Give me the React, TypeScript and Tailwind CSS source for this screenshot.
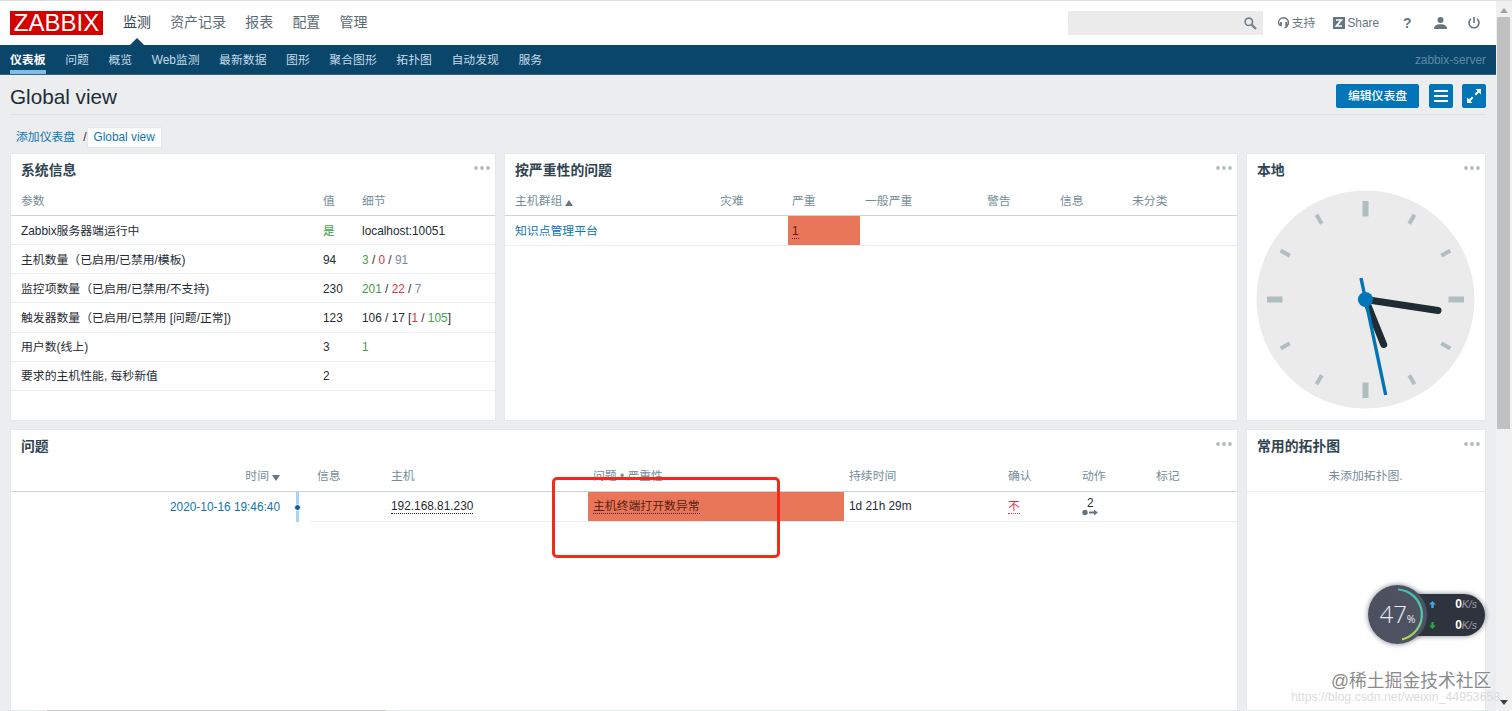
import type { ReactNode } from 'react';

const mainMenu = ['监测', '资产记录', '报表', '配置', '管理'];
const subMenu = ['仪表板', '问题', '概览', 'Web监测', '最新数据', '图形', '聚合图形', '拓扑图', '自动发现', '服务'];

const green = 'text-[#429e47]';
const red = 'text-[#dc3545]';
const grey = 'text-[#768d99]';

const systemInfo: { name: string; value: ReactNode; details?: ReactNode }[] = [
  { name: 'Zabbix服务器端运行中', value: <span className={green}>是</span>, details: 'localhost:10051' },
  {
    name: '主机数量（已启用/已禁用/模板)',
    value: '94',
    details: (
      <>
        <span className={green}>3</span> / <span className={red}>0</span> / <span className={grey}>91</span>
      </>
    ),
  },
  {
    name: '监控项数量（已启用/已禁用/不支持)',
    value: '230',
    details: (
      <>
        <span className={green}>201</span> / <span className={red}>22</span> / <span className={grey}>7</span>
      </>
    ),
  },
  {
    name: '触发器数量（已启用/已禁用 [问题/正常])',
    value: '123',
    details: (
      <>
        106 / 17 [<span className={red}>1</span> / <span className={green}>105</span>]
      </>
    ),
  },
  { name: '用户数(线上)', value: '3', details: <span className={green}>1</span> },
  { name: '要求的主机性能, 每秒新值', value: '2' },
];

function Widget({ title, className, children }: { title: string; className: string; children: ReactNode }) {
  return (
    <section className={`flex flex-col bg-white shadow-[0_0_0_1px_#e6e8ea] ${className}`}>
      <header className="flex h-8 shrink-0 items-center justify-between pr-[5px] pl-[10px]">
        <h4 className="text-[13.85px] font-bold text-[#2f4450]">{title}</h4>
        <svg className="-mt-1 h-1 w-4" viewBox="0 0 16 4" fill="#b4bbbe">
          <circle cx="2" cy="2" r="1.9" />
          <circle cx="8" cy="2" r="1.9" />
          <circle cx="14" cy="2" r="1.9" />
        </svg>
      </header>
      {children}
    </section>
  );
}

function Clock() {
  return (
    <svg className="mt-[4px] ml-[9px] h-[219px] w-[219px]" viewBox="-109.5 -109.5 219 219">
      <circle r="109" fill="#ebebeb" />
      {Array.from({ length: 12 }, (_, i) =>
        i % 3 === 0 ? (
          <rect key={i} x="-3" y="-98.5" width="6" height="15.5" fill="#b0bebf" transform={`rotate(${i * 30})`} />
        ) : (
          <rect key={i} x="-2" y="-98" width="4" height="10.5" fill="#b0bebf" transform={`rotate(${i * 30})`} />
        )
      )}
      <g strokeLinecap="round" stroke="#1f2c33" strokeWidth="7">
        <line x1="0" y1="0" x2="18.2" y2="45" />
        <line x1="0" y1="0" x2="72.5" y2="11" />
      </g>
      <line x1="-4.5" y1="-21.5" x2="20.2" y2="95.5" stroke="#0275b8" strokeWidth="3.4" />
      <circle r="7.6" fill="#0275b8" />
    </svg>
  );
}

function SpeedMonitor() {
  return (
    <div className="absolute top-[585px] left-[1368px] flex items-center">
      <div className="z-10 flex h-[59px] w-[59px] items-center justify-center rounded-full bg-gradient-to-br from-[#4b4f5e] to-[#4f5462] shadow-[0_0_4px_1px_rgba(60,65,85,0.45)]">
        <svg className="absolute top-0 left-0 h-[59px] w-[59px]" viewBox="0 0 59 59" fill="none">
          <defs>
            <linearGradient id="load" x1="0" y1="0" x2="0" y2="1">
              <stop offset="0" stopColor="#3fc4b4" />
              <stop offset="0.6" stopColor="#58c8a8" />
              <stop offset="1" stopColor="#c4cf50" />
            </linearGradient>
          </defs>
          <path d="M30 4.500 A25.200 25.200 0 0 1 34 54.300" stroke="url(#load)" strokeWidth="2.2" />
        </svg>
        <div className="flex items-baseline font-['Open_Sans'] text-[#e9ebf0]">
          <span className="text-[24px] leading-none font-light">47</span>
          <span className="text-[10.5px]">%</span>
        </div>
      </div>
      <div className="-ml-7 flex h-[42px] w-[86px] flex-col justify-center rounded-r-full bg-[#2e333d] pr-2 pl-[30px] shadow-[0_0_4px_1px_rgba(60,65,85,0.45)]">
        <div className="flex h-[21px] items-center justify-between">
          <svg className="h-[7px] w-[7px]" viewBox="0 0 7 7" fill="#42a5e8">
            <path d="M3.5 0 7 3.6H4.7V7H2.300V3.6H0z" />
          </svg>
          <span className="text-[12px] font-bold text-white">
            0<i className="text-[10.5px] font-normal text-[#9ba0aa]">K/s</i>
          </span>
        </div>
        <div className="flex h-[21px] items-center justify-between">
          <svg className="h-[7px] w-[7px]" viewBox="0 0 7 7" fill="#28a745">
            <path d="M3.5 7 0 3.4h2.3V0h2.400v3.4H7z" />
          </svg>
          <span className="text-[12px] font-bold text-white">
            0<i className="text-[10.5px] font-normal text-[#9ba0aa]">K/s</i>
          </span>
        </div>
      </div>
    </div>
  );
}

function Header() {
  return (
    <header className="flex h-[45px] shrink-0 items-center border-t border-[#dedede] bg-white pr-[16px] pl-[10px]">
      <div className="flex h-6 w-[93px] items-center justify-center bg-[#d40000] text-[24px] leading-6 text-white">ZABBIX</div>
      <nav className="ml-5 flex gap-[19.3px] text-[13.95px] text-[#5b6a73]">
        {mainMenu.map((item, i) => (
          <a key={item} className={i === 0 ? 'relative -top-px text-[#2f4450]' : 'relative -top-px'}>
            {item}
            {i === 0 && (
              <svg className="absolute top-[25px] left-[6px] h-2 w-4" viewBox="0 0 16 8" fill="#0a466a">
                <path d="M8 0 16 8H0z" />
              </svg>
            )}
          </a>
        ))}
      </nav>
      <div className="ml-auto flex items-center text-[11.85px] text-[#66757e]">
        <div className="flex h-6 w-[195px] items-center justify-end bg-[#ebebec] pr-[6px]">
          <svg className="h-[13px] w-[13px]" viewBox="0 0 13 13" fill="none" stroke="#74828a">
            <circle cx="4.8" cy="4.8" r="3.7" strokeWidth="1.7" />
            <path d="M7.600 7.600 12 12" strokeWidth="2.2" />
          </svg>
        </div>
        <a className="ml-[15px] flex items-center gap-[3px]">
          <svg className="h-3 w-[11px]" viewBox="0 0 11 12" fill="none" stroke="#66757e">
            <path d="M1.7 8.6C.2 6.8.4 4 1.8 2.4c2-2.2 5.6-2.2 7.5.1 1.3 1.7 1.4 4.3.1 6.1-.6 1.2-1.5 2-3 2.2" strokeWidth="1.4" />
            <path d="M2.800 5v4.200M8.300 5v4.200" strokeWidth="2" />
          </svg>
          支持
        </a>
        <a className="ml-[18px] flex items-center gap-[2px]">
          <svg className="h-3 w-3" viewBox="0 0 12 12">
            <rect width="12" height="12" fill="#66757e" />
            <path d="M3 3h5.400L3.400 9H9" fill="none" stroke="#fff" strokeWidth="1.7" />
          </svg>
          Share
        </a>
        <a className="ml-[24px] w-2 text-[14px] font-bold">?</a>
        <svg className="ml-[23px] h-3 w-[13px]" viewBox="0 0 13 12" fill="#66757e">
          <ellipse cx="6.5" cy="3" rx="3" ry="3" />
          <path d="M0 12c0-3 2-4.800 6.500-4.800S13 9 13 12z" />
        </svg>
        <svg className="ml-[21px] h-3 w-3" viewBox="0 0 12 12" fill="none" stroke="#66757e" strokeWidth="1.6">
          <path d="M6 0v6M3 1.800a5 5 0 1 0 6 0" />
        </svg>
      </div>
    </header>
  );
}

export default function App() {
  return (
    <div className="relative flex h-[711px] w-[1512px] overflow-hidden bg-[#ebedef] font-['Liberation_Sans','Noto_Sans_CJK_SC',sans-serif] text-[11.85px] leading-[18px] text-[#1f2c33]">
      <div className="flex w-[1496px] flex-col">
        <Header />

        {/* Sub menu */}
        <nav className="flex h-[30px] shrink-0 items-center gap-[19.6px] border-b border-[#39637c] bg-[#0a466a] px-[10px] text-[#c5dbe8]">
          {subMenu.map((item, i) => (
            <a
              key={item}
              className={
                i === 0
                  ? 'flex h-[29px] items-center border-b-4 border-[#7dbde8] pt-1 font-bold text-white'
                  : 'flex h-[29px] items-center'
              }
            >
              {item}
            </a>
          ))}
          <span className="ml-auto text-[#5c8ba8]">zabbix-server</span>
        </nav>

        {/* Title row */}
        <div className="mr-[10px] ml-[10px] flex h-10 shrink-0 items-center border-b border-[#dfe2e4] pb-[1px]">
          <h1 className="mt-[5px] text-[20.7px] leading-6">Global view</h1>
          <div className="mt-[3px] ml-auto flex items-center gap-[9.5px]">
            <button className="h-6 w-[83px] rounded-[2px] bg-[#0275b8] font-medium text-white">编辑仪表盘</button>
            <button className="flex h-6 w-6 items-center justify-center rounded-[2px] bg-[#0275b8]">
              <svg className="h-3 w-[14px]" viewBox="0 0 14 12" stroke="#fff" strokeWidth="2">
                <path d="M0 1h14M0 6h14M0 11h14" />
              </svg>
            </button>
            <button className="flex h-6 w-6 items-center justify-center rounded-[2px] bg-[#0275b8]">
              <svg className="h-[14px] w-[14px]" viewBox="0 0 14 14" fill="#fff" stroke="#fff">
                <path d="M8.500 0H14v5.500zM0 8.500V14h5.500z" stroke="none" />
                <path d="M8.300 5.700 12 2M5.700 8.300 2 12" strokeWidth="2" />
              </svg>
            </button>
          </div>
        </div>

        {/* Breadcrumbs */}
        <div className="mt-[12px] flex h-5 shrink-0 items-center pl-4 text-[#0f75b5]">
          <a>添加仪表盘</a>
          <span className="mr-px ml-[8px] text-[#1f2c33]">/</span>
          <a className="flex h-[19px] items-center bg-white px-[6px] shadow-[0_0_0_1px_#e4e7e9]">Global view</a>
        </div>

        <main className="mt-[7px] ml-[11px] flex flex-1 flex-col gap-[10px]">
          <div className="flex h-[266px] shrink-0 gap-[10px]">
            <Widget title="系统信息" className="w-[484px]">
              <div className="grid h-[30px] shrink-0 grid-cols-[302px_39px_1fr] items-center border-b border-[#ccd5d9] pl-[10px] text-[#768d99]">
                <span>参数</span>
                <span>值</span>
                <span>细节</span>
              </div>
              {systemInfo.map((row) => (
                <div
                  key={row.name}
                  className="grid h-[29.15px] grid-cols-[302px_39px_1fr] items-center border-b border-[#ebeef0] pt-px pl-[10px] first-of-type:mt-0 nth-2:pt-0"
                >
                  <span>{row.name}</span>
                  <span>{row.value}</span>
                  <span>{row.details}</span>
                </div>
              ))}
            </Widget>

            <Widget title="按严重性的问题" className="w-[732px]">
              <div className="grid h-[30px] grid-cols-[205px_72px_73px_122px_73px_72px_1fr] items-center border-b border-[#ccd5d9] pl-[10px] text-[#768d99]">
                <span className="flex items-center gap-[3px]">
                  主机群组
                  <svg className="mt-1 h-[6px] w-2" viewBox="0 0 8 6" fill="#66757e">
                    <path d="M4 0 8 6H0z" />
                  </svg>
                </span>
                <span>灾难</span>
                <span>严重</span>
                <span>一般严重</span>
                <span>警告</span>
                <span>信息</span>
                <span>未分类</span>
              </div>
              <div className="flex h-[29.5px] border-b border-[#ebeef0] pl-[10px]">
                <a className="flex w-[273px] items-center pt-px text-[#0f75b5]">知识点管理平台</a>
                <div className="flex w-[72px] items-center bg-[#e97659] pt-[3px] pl-1">
                  <span className="border-b border-dotted border-[#5a2013] leading-[13px] text-[#5a2013]">1</span>
                </div>
              </div>
            </Widget>

            <Widget title="本地" className="w-[238px]">
              <Clock />
            </Widget>
          </div>

          <div className="flex h-[281px] gap-[10px]">
            <Widget title="问题" className="w-[1226px]">
              <div className="grid h-[30px] grid-cols-[269px_37px_74px_202px_256px_159px_74px_74px_1fr] items-center border-b border-[#ccd5d9] pb-px text-[#768d99]">
                <span className="flex items-center justify-end gap-[3px]">
                  时间
                  <svg className="mt-[3px] h-[6px] w-2" viewBox="0 0 8 6" fill="#66757e">
                    <path d="M4 6 0 0h8z" />
                  </svg>
                </span>
                <span />
                <span>信息</span>
                <span>主机</span>
                <span>问题 • 严重性</span>
                <span>持续时间</span>
                <span>确认</span>
                <span>动作</span>
                <span>标记</span>
              </div>
              <div className="flex h-[30px]">
                <a className="flex w-[269px] items-center justify-end pb-px text-[#0f75b5]">2020-10-16 19:46:40</a>
                <div className="flex w-[31px] justify-center pl-[3px]">
                  <div className="flex w-[3px] items-center justify-center bg-[#a6d4f2]">
                    <span className="h-[7px] w-[7px] shrink-0 rounded-full border border-white bg-[#0a62a0]" />
                  </div>
                </div>
                <div className="grid flex-1 grid-cols-[277px_256px_164px_74px_1fr] border-b border-[#ebeef0]">
                  <div className="flex items-center pl-20">
                    <span className="border-b border-dotted border-[#1f2c33] leading-[14px]">192.168.81.230</span>
                  </div>
                  <div className="flex items-center bg-[#e97659] pl-[5px]">
                    <span className="border-b border-dotted border-[#5a2013] leading-[14px] text-[#5a2013]">主机终端打开数异常</span>
                  </div>
                  <div className="flex items-center pb-px pl-[5px]">1d 21h 29m</div>
                  <div className="flex items-center">
                    <span className="border-b border-dotted border-[#dc3545] leading-[14px] text-[#dc3545]">不</span>
                  </div>
                  <div className="flex flex-col items-start justify-center pt-px">
                    <span className="pl-[5px] leading-[11px]">2</span>
                    <svg className="h-[7px] w-4" viewBox="0 0 16 7" fill="#66757e">
                      <circle cx="3" cy="3.500" r="2.700" />
                      <path d="M7 2.600h5V.5l3.900 3L12 6.500V4.400H7z" />
                    </svg>
                  </div>
                </div>
              </div>
            </Widget>

            <Widget title="常用的拓扑图" className="w-[238px]">
              <div className="flex h-[30px] items-center justify-center border-b border-[#ebeef0] pr-px pb-px text-[#768d99]">
                未添加拓扑图.
              </div>
            </Widget>
          </div>
        </main>
      </div>

      {/* Scrollbar */}
      <div className="flex w-4 flex-col items-center border-t border-[#dedede] bg-[#f1f1f1]">
        <svg className="mt-[7px] h-[5px] w-2" viewBox="0 0 8 5" fill="#a3a3a3">
          <path d="M4 0 8 5H0z" />
        </svg>
        <div className="mt-1 mr-px h-[412px] w-[13px] bg-[#c1c1c1]" />
        <svg className="mt-auto mb-[6px] h-[5px] w-2" viewBox="0 0 8 5" fill="#404040">
          <path d="M4 5 0 0h8z" />
        </svg>
      </div>

      {/* Highlight frame */}
      <div className="absolute top-[477px] left-[552px] h-[81px] w-[228px] rounded-[5px] border-[3px] border-[#f3291c]" />

      <SpeedMonitor />

      {/* Watermarks */}
      <div className="absolute top-[688px] left-[1291px] text-[12.3px] whitespace-nowrap text-[#dcdcdc]">
        https://blog.csdn.net/weixin_44953658
      </div>
      <div className="absolute top-[669px] left-[1331px] text-[17.8px] leading-6 whitespace-nowrap text-[#8b8b8b] [text-shadow:1px_1px_1px_#fff]">
        @稀土掘金技术社区
      </div>

      {/* Window bottom edge */}
      <div className="absolute bottom-0 left-0 flex h-px w-[1496px] bg-[#e2ebe9] pl-[47px]">
        <div className="w-[339px] bg-[#c9c9c9]" />
      </div>
    </div>
  );
}
